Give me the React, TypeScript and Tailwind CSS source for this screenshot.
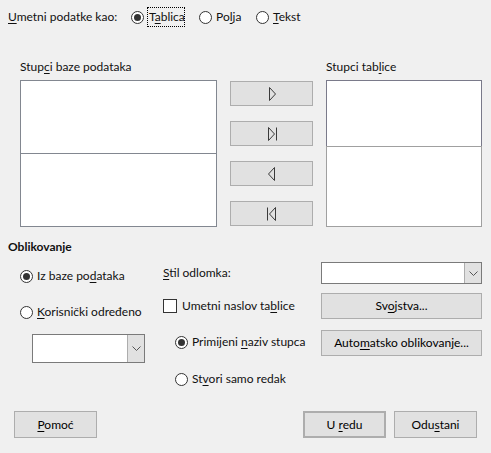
import type { ReactNode } from 'react';

const font = { fontFamily: 'Lato, "Noto Sans", "Liberation Sans", sans-serif' };

function U({ children }: { children: ReactNode }) {
  return <span className="underline underline-offset-2 decoration-1">{children}</span>;
}

function Radio({ checked }: { checked?: boolean }) {
  return (
    <span className="flex h-[13px] w-[13px] shrink-0 items-center justify-center rounded-full border border-[#333] bg-white">
      {checked && <span className="h-[7px] w-[7px] rounded-full bg-[#333]" />}
    </span>
  );
}

function Btn({ children, className = '' }: { children: ReactNode; className?: string }) {
  return (
    <div
      className={`flex items-center justify-center border border-[#adadad] bg-[#e1e1e1] text-black ${className}`}
    >
      {children}
    </div>
  );
}

function Combo({ className = '' }: { className?: string }) {
  return (
    <div className={`flex border border-[#7a7a7a] bg-white ${className}`}>
      <div className="flex-1" />
      <div className="flex w-[17px] items-center justify-center border-l border-[#adadad] bg-[#e1e1e1]">
        <svg width="9" height="5" viewBox="0 0 9 5" fill="none" stroke="#555" strokeWidth="1">
          <path d="M0.5 0.5 L4.5 4.5 L8.5 0.5" />
        </svg>
      </div>
    </div>
  );
}

function Arrow({ dir, bar }: { dir: 'right' | 'left'; bar?: boolean }) {
  return (
    <svg width="14" height="16" viewBox="0 0 14 16" fill="none" stroke="#3a3a3a" strokeWidth="1">
      {dir === 'right' ? (
        <>
          <path d={bar ? 'M3.5 1.5 L9.5 8 L3.5 14.5 Z' : 'M4.5 1.5 L10.5 8 L4.5 14.5 Z'} />
          {bar && <path d="M11.5 1.5 L11.5 14.5" />}
        </>
      ) : (
        <>
          <path d={bar ? 'M10.5 1.5 L4.5 8 L10.5 14.5 Z' : 'M9.5 1.5 L3.5 8 L9.5 14.5 Z'} />
          {bar && <path d="M2.5 1.5 L2.5 14.5" />}
        </>
      )}
    </svg>
  );
}

export default function App() {
  return (
    <div
      className="flex h-[453px] w-[491px] flex-col whitespace-nowrap bg-[#f0f0f0] text-[12px] leading-[16px] text-[#111]"
      style={font}
    >
      {/* Insert as */}
      <div className="flex h-[34px] items-center pl-[8px]">
        <span className="w-[123px]">
          <U>U</U>metni podatke kao:
        </span>
        <Radio checked />
        <span className="ml-[3px] w-[38px] border border-dotted border-black pl-[1px] leading-[18px]">
          T<U>a</U>blica
        </span>
        <span className="ml-[14px]">
          <Radio />
        </span>
        <span className="ml-[4px] w-[40px]">
          Po<U>l</U>ja
        </span>
        <Radio />
        <span className="ml-[4px]">
          <U>T</U>ekst
        </span>
      </div>

      {/* Columns */}
      <div className="flex h-[193px] pl-[20px]">
        <div className="flex w-[197px] flex-col pt-[26px]">
          <div className="h-[14px] leading-[14px]">
            Stup<U>c</U>i baze podataka
          </div>
          <div className="mt-[6px] flex flex-col">
            <div className="h-[74px] border border-[#828790] bg-white" />
            <div className="-mt-px h-[74px] border border-[#828790] bg-white" />
          </div>
        </div>
        <div className="ml-[13px] flex w-[83px] flex-col gap-[15px] pt-[47px]">
          <Btn className="h-[25px]">
            <Arrow dir="right" />
          </Btn>
          <Btn className="h-[25px]">
            <Arrow dir="right" bar />
          </Btn>
          <Btn className="h-[25px]">
            <Arrow dir="left" />
          </Btn>
          <Btn className="h-[25px]">
            <Arrow dir="left" bar />
          </Btn>
        </div>
        <div className="ml-[13px] flex w-[156px] flex-col pt-[26px]">
          <div className="h-[14px] leading-[14px]">
            Stupci tab<U>l</U>ice
          </div>
          <div className="mt-[6px] flex flex-col">
            <div className="h-[67px] border border-[#7a7a8a] bg-white" />
            <div className="-mt-px h-[81px] border border-[#a0a0a0] bg-white" />
          </div>
        </div>
      </div>

      {/* Formatting */}
      <div className="mt-[12px] h-[16px] pl-[8px] font-bold">Oblikovanje</div>
      <div className="flex h-[134px]">
        <div className="flex w-[163px] flex-col pl-[20px]">
          <div className="mt-[11px] flex h-[20px] items-center gap-[4px]">
            <Radio checked />
            <span>
              Iz baze po<U>d</U>ataka
            </span>
          </div>
          <div className="mt-[16px] flex h-[20px] items-center gap-[4px]">
            <Radio />
            <span>
              <U>K</U>orisnički određeno
            </span>
          </div>
          <Combo className="ml-[12px] mt-[12px] h-[29px] w-[113px]" />
        </div>
        <div className="flex w-[158px] flex-col">
          <div className="mt-[8px] flex h-[20px] items-center">
            <span>
              <U>S</U>til odlomka:
            </span>
          </div>
          <div className="mt-[13px] flex h-[20px] items-center gap-[5px]">
            <span className="h-[14px] w-[14px] border border-[#333] bg-white" />
            <span>
              Umetni naslov ta<U>b</U>lice
            </span>
          </div>
          <div className="ml-[12px] mt-[16px] flex h-[20px] items-center gap-[4px]">
            <Radio checked />
            <span>
              Primijeni <U>n</U>aziv stupca
            </span>
          </div>
          <div className="ml-[12px] mt-[17px] flex h-[20px] items-center gap-[4px]">
            <Radio />
            <span>
              St<U>v</U>ori samo redak
            </span>
          </div>
        </div>
        <div className="flex w-[161px] flex-col">
          <Combo className="mt-[7px] h-[22px]" />
          <Btn className="mt-[9px] h-[26px]">
            <span>
              Sv<U>o</U>jstva...
            </span>
          </Btn>
          <Btn className="mt-[11px] h-[26px]">
            <span>
              Auto<U>m</U>atsko oblikovanje...
            </span>
          </Btn>
        </div>
      </div>

      {/* Bottom buttons */}
      <div className="mt-[22px] flex h-[27px] pl-[14px]">
        <Btn className="w-[83px]">
          <span>
            <U>P</U>omoć
          </span>
        </Btn>
        <div className="flex-1" />
        <Btn className="w-[83px] border-2 border-[#0078d7]">
          <span>
            U <U>r</U>edu
          </span>
        </Btn>
        <Btn className="ml-[8px] mr-[14px] w-[83px]">
          <span>
            Odu<U>s</U>tani
          </span>
        </Btn>
      </div>
    </div>
  );
}
